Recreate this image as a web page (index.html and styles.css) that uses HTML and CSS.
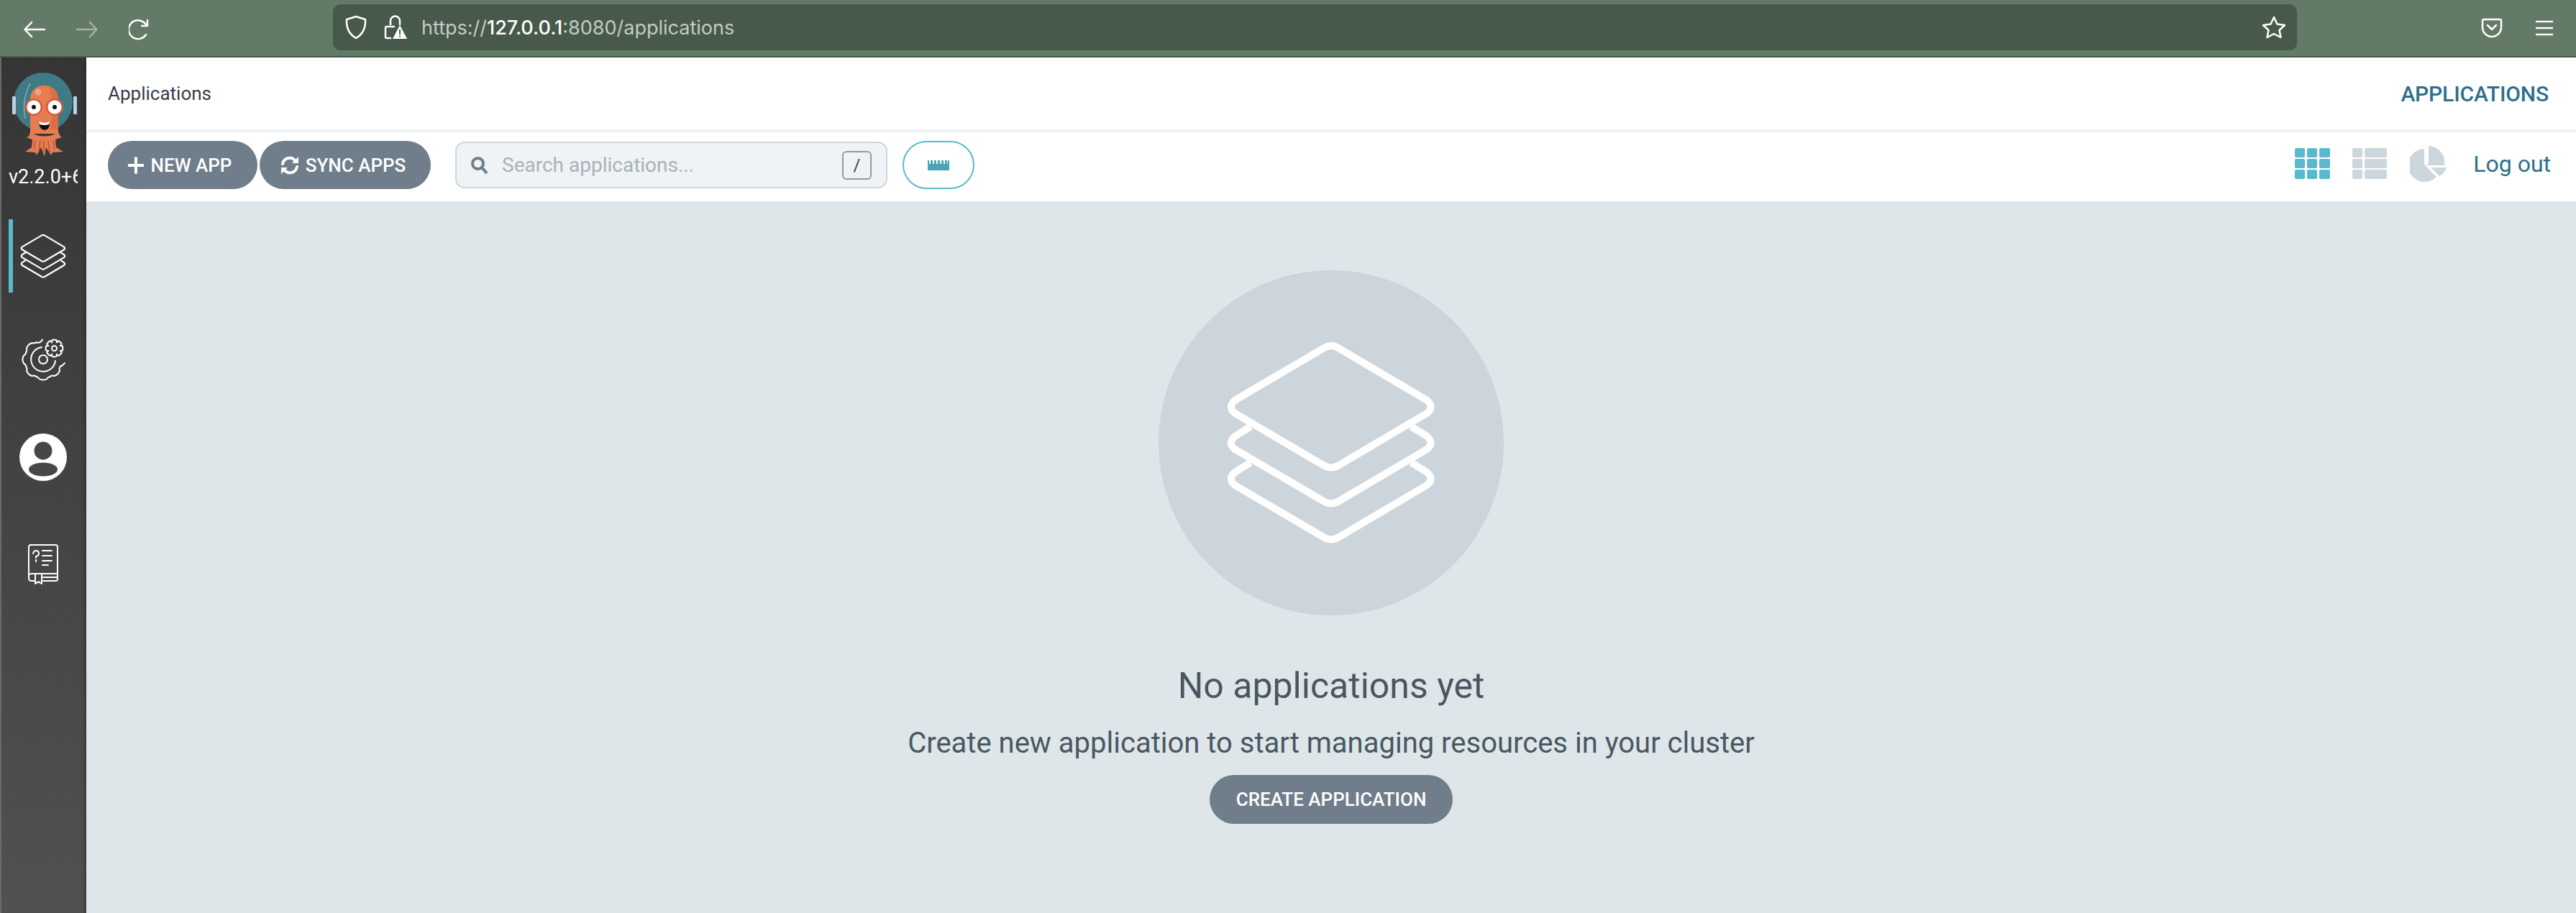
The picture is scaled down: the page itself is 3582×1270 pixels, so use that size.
FILE: index.html
```html
<!DOCTYPE html>
<html lang="en">
<head>
<meta charset="utf-8">
<title>Applications</title>
<link rel="stylesheet" href="styles.css">
</head>
<body>
<svg class="defs" width="0" height="0" aria-hidden="true">
  <defs>
    <g id="stack">
      <path d="M135.3 7.3Q144 2.7 152.7 7.3L277 80.7Q288 90 277 99L152.7 172.3Q144 176.7 135.3 172.3L10.3 99Q-.6 90 10.3 80.7Z"/>
      <path d="M32 117.3L10.3 130.7Q-.6 140 10.3 149L135.3 222.3Q144 226.5 152.7 222.3L277 149Q288 140 277 130.7L255.3 117.3"/>
      <path d="M32 167.3L10.3 180.7Q-.6 190 10.3 199L135.3 272.3Q144 276.5 152.7 272.3L277 199Q288 190 277 180.7L255.3 167.3"/>
    </g>
    <path id="tooth-s" d="M-3.400-8.300Q-3.800-11.800-1.900-11.800H1.900Q3.800-11.800 3.400-8.300"/>
    <path id="tooth-l" d="M-9.800-23.700Q-6.400-24.600-5.500-27Q-3-28.600 0-28.600Q3-28.600 5.500-27Q6.400-24.600 9.800-23.700"/>
  </defs>
</svg>

<header class="chrome">
  <div class="chrome-nav">
    <svg class="ci" width="30" height="24" viewBox="0 0 30 24"><path d="M29 12H2M11 2L1.500 12L11 22"/></svg>
    <svg class="ci ci-dim" width="30" height="24" viewBox="0 0 30 24"><path d="M1 12H28M19 2L28.500 12L19 22"/></svg>
    <svg class="ci" width="30" height="30" viewBox="0 0 30 30"><path d="M24 22A13 13 0 1 1 21 5L26 10M26 2V10H18"/></svg>
  </div>
  <div class="urlbar">
    <svg class="ci" width="30" height="34" viewBox="0 0 30 34"><path d="M15 2L28 6Q29 24 15 32Q1 24 2 6Z"/></svg>
    <svg class="lock" width="32" height="34" viewBox="0 0 32 34"><path class="lock-l" d="M9 14V8A6.500 6.500 0 0 1 22 8V14M15 16H4Q2 16 2 18V30Q2 32 4 32H10"/><path class="lock-w" d="M22 14L32 33H12Z"/><rect class="lock-m" x="21" y="20" width="2" height="7"/><rect class="lock-m" x="21" y="28.500" width="2" height="2"/></svg>
    <span class="url">https://<b>127.0.0.1</b>:8080/applications</span>
    <svg class="ci star" width="34" height="32" viewBox="0 0 34 32"><path d="M17 2L21.500 11.500L32 13L24.500 20L26.500 30L17 25L7.500 30L9.500 20L2 13L12.500 11.500Z"/></svg>
  </div>
  <div class="chrome-end">
    <svg class="ci" width="30" height="28" viewBox="0 0 30 28"><path d="M4 2H26Q28 2 28 4V13A13 13 0 0 1 2 13V4Q2 2 4 2ZM9 10L15 16L21 10"/></svg>
    <svg class="ci" width="24" height="22" viewBox="0 0 24 22"><path d="M0 2H24M0 11H24M0 20H24"/></svg>
  </div>
</header>

<div class="shell">
  <aside class="sidebar">
    <svg class="logo" width="96" height="120" viewBox="12 99 96 120">
      <circle cx="60" cy="142" r="41" fill="#3f7a85"/>
      <rect x="17" y="134" width="5" height="25" rx="1" fill="#b7d0e4"/>
      <rect x="102" y="134" width="5" height="25" rx="1" fill="#b7d0e4"/>
      <path d="M42 116Q30 138 35 165" fill="none" stroke="#6fa3a8" stroke-width="2"/>
      <path d="M42 186V138C42 126 50 119 62 119C74 119 81 127 81 138V186Z" fill="#e67c50"/>
      <path d="M68 120C76 122 81 130 81 138V180H70C74 160 74 135 68 120Z" fill="#d96f47"/>
      <path d="M42 184Q62 195 81 184L84 190L86 191L77 194L78 205L88 211L73 212L71 216L64 205L62 218L57 205L51 216L49 212L35 211L44 205L45 194L36 191L40 190Z" fill="#e67c50"/>
      <path d="M49 196L47 208M56 196L54 212M67 196L69 212M74 196L76 208M61 196V212" stroke="#a84f30" stroke-width="1.200" fill="none"/>
      <circle cx="53" cy="128" r="4.500" fill="#f0a088"/>
      <circle cx="47" cy="149" r="12" fill="#dd5a3c"/><circle cx="47" cy="149" r="9.500" fill="#fff"/><circle cx="47" cy="149" r="3" fill="#111"/>
      <circle cx="76" cy="149" r="12" fill="#dd5a3c"/><circle cx="76" cy="149" r="9.500" fill="#fff"/><circle cx="76" cy="149" r="3" fill="#111"/>
      <path d="M54 170Q62 174 69 170Q69 181 62 181Q55 181 54 170Z" fill="#111"/>
      <path d="M54 169Q62 173 69 169L68 173Q62 175 55 173Z" fill="#fff"/>
    </svg>
    <div class="version"><span>v2.2.0+6d2e4c5</span></div>
    <nav class="side-nav">
      <div class="nav-item nav-active">
        <svg class="side-stack" width="64" height="62" viewBox="-3 -3 294 284"><use href="#stack"/></svg>
      </div>
      <div class="nav-item nav-gear">
        <svg class="side-line" width="62" height="62" viewBox="-31 -30 62 62">
          <g transform="translate(0 1)">
            <use href="#tooth-l" transform="rotate(135)"/>
            <use href="#tooth-l" transform="rotate(180)"/>
            <use href="#tooth-l" transform="rotate(225)"/>
            <use href="#tooth-l" transform="rotate(270)"/>
            <use href="#tooth-l" transform="rotate(315)"/>
            <path d="M-9.800 -23.700Q-4-22-1-27.500"/>
            <path d="M23.700 9.800Q27 9 30 5"/>
            <path d="M-2 -17A17 17 0 1 0 17 2"/>
            <circle r="6"/>
          </g>
          <g transform="translate(15.500 -14.500)">
            <use href="#tooth-s"/><use href="#tooth-s" transform="rotate(45)"/><use href="#tooth-s" transform="rotate(90)"/><use href="#tooth-s" transform="rotate(135)"/><use href="#tooth-s" transform="rotate(180)"/><use href="#tooth-s" transform="rotate(225)"/><use href="#tooth-s" transform="rotate(270)"/><use href="#tooth-s" transform="rotate(315)"/>
            <circle r="3.500"/>
          </g>
        </svg>
      </div>
      <div class="nav-item nav-user">
        <svg width="66" height="66" viewBox="0 0 66 66"><circle class="u-bg" cx="33" cy="33" r="33"/><circle class="u-fg" cx="33" cy="24" r="12.500"/><ellipse class="u-fg" cx="33" cy="50" rx="20" ry="9.500"/></svg>
      </div>
      <div class="nav-item nav-book">
        <svg class="side-line" width="42" height="56" viewBox="0 0 42 56">
          <path d="M4 1H38Q41 1 41 4V49Q41 51 38 51H21M10 51H5Q1 51 1 47V44Q1 41 5 41H41M21 46H41"/>
          <path d="M1 44V4Q1 1 4 1"/>
          <path d="M10 41V55L14.500 52L19 55V41"/>
          <path d="M7 13Q8 9 11 9Q15 9 15 13Q15 16 11 17V19M11 22V24M20 9H33M20 16H33M20 23H33M20 29H28"/>
        </svg>
      </div>
    </nav>
  </aside>

  <main class="page">
    <div class="topbar">
      <h1 class="crumb">Applications</h1>
      <span class="page-title">APPLICATIONS</span>
    </div>
    <div class="toolbar">
      <button class="btn btn-new">
        <svg class="btn-ic" width="22" height="24" viewBox="0 0 22 24"><path d="M11 2V22M1 12H21"/></svg>NEW APP
      </button>
      <button class="btn btn-sync">
        <svg class="btn-ic sync" width="26" height="26" viewBox="0 0 26 26"><path d="M3 11A10 10 0 0 1 21 7M23 15A10 10 0 0 1 5 19"/><path class="sync-h" d="M25 1V10H16ZM1 25V16H10Z"/></svg>SYNC APPS
      </button>
      <label class="search">
        <svg class="search-ic" width="26" height="26" viewBox="0 0 26 26"><circle cx="10.500" cy="10.500" r="7.500"/><path d="M16 16L23 24"/></svg>
        <span class="placeholder">Search applications...</span>
        <kbd class="kbd">/</kbd>
      </label>
      <button class="btn-filter">
        <svg width="30" height="14" viewBox="0 0 30 14"><path d="M0 0H2V5H4V0H7V5H9V0H12V5H14V0H17V5H19V0H22V5H24V0H27V5H28V0H30V14H0Z"/></svg>
      </button>
      <div class="toolbar-end">
        <svg class="view view-on" width="50" height="44" viewBox="0 0 50 44"><rect width="14" height="13" rx="2"/><rect x="17" width="14" height="13" rx="2"/><rect x="34" width="15" height="13" rx="2"/><rect y="15" width="14" height="13" rx="2"/><rect x="17" y="15" width="14" height="13" rx="2"/><rect x="34" y="15" width="15" height="13" rx="2"/><rect y="30" width="14" height="13" rx="2"/><rect x="17" y="30" width="14" height="13" rx="2"/><rect x="34" y="30" width="15" height="13" rx="2"/></svg>
        <svg class="view" width="50" height="44" viewBox="0 0 50 44"><rect width="14" height="13" rx="2"/><rect x="17" width="31" height="13" rx="2"/><rect y="15" width="14" height="13" rx="2"/><rect x="17" y="15" width="31" height="13" rx="2"/><rect y="30" width="14" height="13" rx="2"/><rect x="17" y="30" width="31" height="13" rx="2"/></svg>
        <svg class="view" width="52" height="50" viewBox="0 0 52 50"><path d="M22 27H48A23 23 0 0 0 26 0V23Q26 25 22 27ZM20 4A23 23 0 1 0 37 43L20 26ZM29 30L41 42Q48 38 51 30Z"/></svg>
        <a class="logout">Log out</a>
      </div>
    </div>
    <section class="empty">
      <div class="empty-circle">
        <svg class="empty-stack" width="288" height="282" viewBox="0 0 288 282"><use href="#stack"/></svg>
      </div>
      <h2 class="empty-title">No applications yet</h2>
      <p class="empty-sub">Create new application to start managing resources in your cluster</p>
      <button class="btn btn-create">CREATE APPLICATION</button>
    </section>
  </main>
</div>
</body>
</html>
```
FILE: styles.css
```css
* { box-sizing: border-box; }
html, body { margin: 0; height: 100%; overflow: hidden; }
body { display: flex; flex-direction: column; font-family: Roboto, "Liberation Sans", sans-serif; background: #fff; }
.defs { position: absolute; }

.chrome { flex: 0 0 80px; display: flex; align-items: flex-start; background: #637a67; border-bottom: 2px solid #47594a; }
.ci { fill: none; stroke: #fff; stroke-width: 2.5; stroke-linecap: round; stroke-linejoin: round; display: block; }
.ci-dim { opacity: .42; }
.chrome-nav { flex: 0 0 463px; display: flex; align-items: center; gap: 43px; padding: 26px 0 0 33px; }
.urlbar { flex: 0 0 2731px; height: 64px; margin-top: 6px; background: #47594a; border-radius: 10px; display: flex; align-items: center; padding: 0 15px 0 17px; }
.lock { margin-left: 24px; display: block; }
.lock-l { fill: none; stroke: #fff; stroke-width: 2.5; }
.lock-w { fill: #fff; }
.lock-m { fill: #47594a; }
.url { margin-left: 20px; font-family: Inter, Roboto, sans-serif; font-size: 27px; color: #c3cbc5; }
.url b { color: #fff; font-weight: 500; }
.star { margin-left: auto; }
.chrome-end { flex: 1; display: flex; align-items: center; gap: 46px; padding: 25px 0 0 256px; }

.shell { flex: 1; display: flex; min-height: 0; }
.sidebar { flex: 0 0 120px; background: linear-gradient(#353535, #515151); border-left: 2px solid #6a6a6a; box-shadow: inset -6px 0 6px -6px #222; display: flex; flex-direction: column; align-items: flex-start; }
.logo { margin: 19px 0 0 10px; display: block; }
.version { width: 96px; margin: 12px 0 0 10px; overflow: hidden; white-space: nowrap; color: #fff; font-size: 27px; line-height: 30px; }
.side-nav { margin-top: 44px; display: flex; flex-direction: column; width: 100%; }
.nav-item { height: 102px; margin-left: 10px; display: flex; align-items: center; justify-content: center; padding-right: 12px; }
.nav-active { border-left: 6px solid #5ab9ce; padding-right: 18px; }
.nav-gear { margin-top: 42px; }
.nav-user { margin-top: 34px; }
.nav-book { margin-top: 47px; }
.side-stack { fill: none; stroke: #fff; stroke-width: 10; }
.side-line { fill: none; stroke: #fff; stroke-width: 2; stroke-linecap: round; stroke-linejoin: round; }
.u-bg { fill: #fff; }
.u-fg { fill: #474747; }

.page { flex: 1; min-width: 0; display: flex; flex-direction: column; background: #dee6e9; }
.topbar { flex: 0 0 104px; background: #fff; border-bottom: 4px solid #eff3f5; display: flex; align-items: center; justify-content: space-between; padding: 0 38px 0 30px; }
.crumb { margin: 0; font-size: 26px; font-weight: 400; color: #363c4a; }
.page-title { font-size: 30px; font-weight: 500; color: #2d7088; letter-spacing: -.15px; }
.toolbar { flex: 0 0 98px; background: #fff; border-bottom: 2px solid #e4eaee; display: flex; align-items: flex-start; padding: 12px 35px 0 30px; }
.btn { border: 0; background: #6f7e8a; color: #fff; font-family: inherit; font-size: 26px; font-weight: 500; height: 67px; border-radius: 34px; display: flex; align-items: center; justify-content: center; padding: 0; }
.btn-ic { display: block; fill: none; stroke: #fff; stroke-width: 4; stroke-linecap: round; }
.btn-new { width: 208px; gap: 10px; padding-right: 8px; }
.btn-sync { width: 238px; margin-left: 3px; gap: 9px; padding-right: 6px; }
.sync-h { fill: #fff; stroke: none; }
.search { width: 601px; height: 65px; margin: 1px 0 0 34px; background: #eff3f5; border: 2.5px solid #ccd6dd; border-radius: 13px; display: flex; align-items: center; padding: 0 20px 0 19px; }
.search-ic { fill: none; stroke: #6f7e8a; stroke-width: 4; flex: none; }
.placeholder { margin-left: 18px; font-size: 28px; color: #a9b2b9; }
.kbd { margin-left: auto; width: 41px; height: 40px; border: 2.5px solid #8c9ba6; border-radius: 6px; display: flex; align-items: center; justify-content: center; font-family: Roboto, sans-serif; font-size: 24px; color: #363c4a; }
.btn-filter { width: 100px; height: 67px; margin-left: 21px; background: #fff; border: 2px solid #5ab9ce; border-radius: 34px; display: flex; align-items: center; justify-content: center; padding: 0; }
.btn-filter svg { fill: #4aa3b8; }
.toolbar-end { margin-left: auto; display: flex; align-items: center; height: 64px; }
.view { fill: #ccd6dd; display: block; margin-right: 30px; }
.view-on { fill: #5ab9ce; }
.logout { margin-left: 6px; font-size: 32px; color: #2d7088; }

.empty { flex: 1; display: flex; flex-direction: column; align-items: center; padding-top: 94px; color: #495763; }
.empty-circle { width: 480px; height: 480px; border-radius: 50%; background: #cdd5dc; display: flex; align-items: center; justify-content: center; }
.empty-stack { fill: none; stroke: #fff; stroke-width: 10; margin-top: 2px; }
.empty-title { margin: 68px 0 0; font-size: 50px; line-height: 60px; font-weight: 400; }
.empty-sub { margin: 22px 0 0; font-size: 40px; line-height: 56px; }
.btn-create { width: 338px; height: 68px; margin-top: 16px; }
```
